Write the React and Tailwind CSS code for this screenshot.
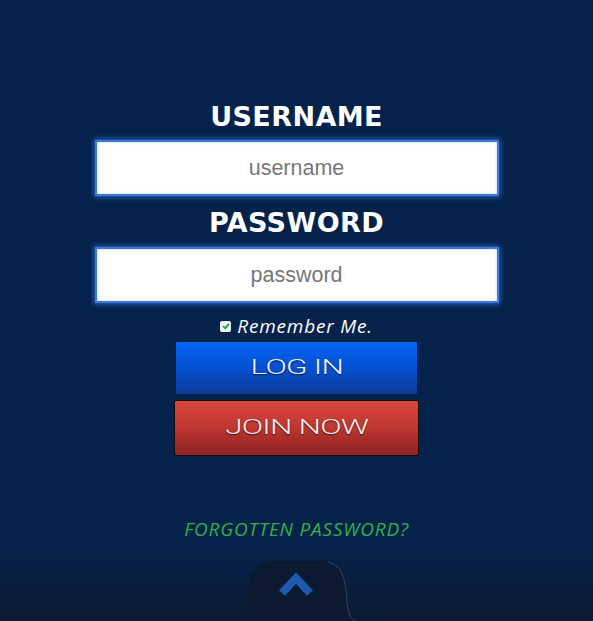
import React from 'react'

function FieldLabel({ children }) {
  return (
    <div className="h-[30px] leading-[30px] text-[27px] tracking-[0.4px] font-bold text-white text-center font-['DejaVu_Sans',Verdana,sans-serif]">
      {children}
    </div>
  )
}

function TextBox({ placeholder, type = 'text' }) {
  return (
    <input
      type={type}
      placeholder={placeholder}
      className="w-[404px] h-[56px] bg-white border-2 border-[#3f78d8] shadow-[0_0_5px_1px_#2c66c9,inset_0_0_3px_#b8cff5] text-center text-[21.5px] text-[#444] placeholder:text-[#777] font-['Liberation_Sans',Arial,sans-serif] outline-none"
    />
  )
}

function BackToTop() {
  return (
    <svg width="122" height="64" viewBox="0 0 122 64" fill="none">
      <path
        d="M0 64 C8 62 10 56 11 44 C12 24 16 6 34 4 L88 4 C106 6 110 24 111 44 C112 56 114 62 122 64 Z"
        fill="#0b1a31"
      />
      <path
        d="M92 5 C106 8 110 24 111 44 C112 56 114 62 120 64"
        stroke="#3d5577"
        strokeWidth="1"
        opacity="0.7"
      />
      <g stroke="#13233d" strokeWidth="1" strokeDasharray="1 2">
        <line x1="34" y1="9" x2="88" y2="9" />
        <line x1="30" y1="13" x2="92" y2="13" />
      </g>
      <path d="M46 36 L60 21 L74 36" stroke="#1d5aae" strokeWidth="8" strokeLinejoin="miter" />
    </svg>
  )
}

export default function App() {
  return (
    <div className="w-full h-[621px] bg-[#05224a] flex flex-col items-center overflow-hidden">
      <div className="mt-[102px]">
        <FieldLabel>USERNAME</FieldLabel>
      </div>
      <div className="mt-[8px]">
        <TextBox placeholder="username" />
      </div>
      <div className="mt-[12px]">
        <FieldLabel>PASSWORD</FieldLabel>
      </div>
      <div className="mt-[9px]">
        <TextBox placeholder="password" type="password" />
      </div>

      <label className="mt-[12px] h-[22px] flex items-center gap-[6px] text-white italic text-[19px] tracking-[0.8px] font-['Open_Sans',sans-serif]">
        <span className="w-[11px] h-[11px] rounded-[2px] bg-[#e9f4ee] flex items-center justify-center">
          <svg width="8" height="8" viewBox="0 0 8 8" fill="none">
            <path d="M1 4.2 L3.2 6.2 L7 1.8" stroke="#1aa05a" strokeWidth="1.8" />
          </svg>
        </span>
        Remember Me.
      </label>

      <button className="mt-[4px] w-[243px] h-[54px] border border-[#0b1c3e] rounded-[2px] bg-gradient-to-b from-[#0366f5] via-[#0550d2] to-[#0c3a98] flex items-center justify-center">
        <span className="inline-block scale-x-[1.5] text-[21px] font-light tracking-[-0.5px] text-[#eef3fb] font-['Roboto',sans-serif] [text-shadow:0_1px_1px_rgba(0,0,0,0.7)]">
          LOG IN
        </span>
      </button>
      <button className="mt-[5px] w-[245px] h-[56px] border border-[#1a0a0a] rounded-[2px] bg-gradient-to-b from-[#d8473e] via-[#bd3630] to-[#8c2020] flex items-center justify-center">
        <span className="inline-block scale-x-[1.5] text-[21px] font-light tracking-[-0.5px] text-[#f6eeee] font-['Roboto',sans-serif] [text-shadow:0_1px_1px_rgba(0,0,0,0.7)]">
          JOIN NOW
        </span>
      </button>

      <a className="mt-[61px] text-[19px] tracking-[0.8px] italic text-[#33b04a] font-['Open_Sans',sans-serif] leading-[24px] cursor-pointer">
        FORGOTTEN PASSWORD?
      </a>

      <div className="mt-[8px] w-full flex-1 bg-gradient-to-b from-[#05224a] to-[#0b1a30] flex items-end justify-center">
        <BackToTop />
      </div>
    </div>
  )
}
